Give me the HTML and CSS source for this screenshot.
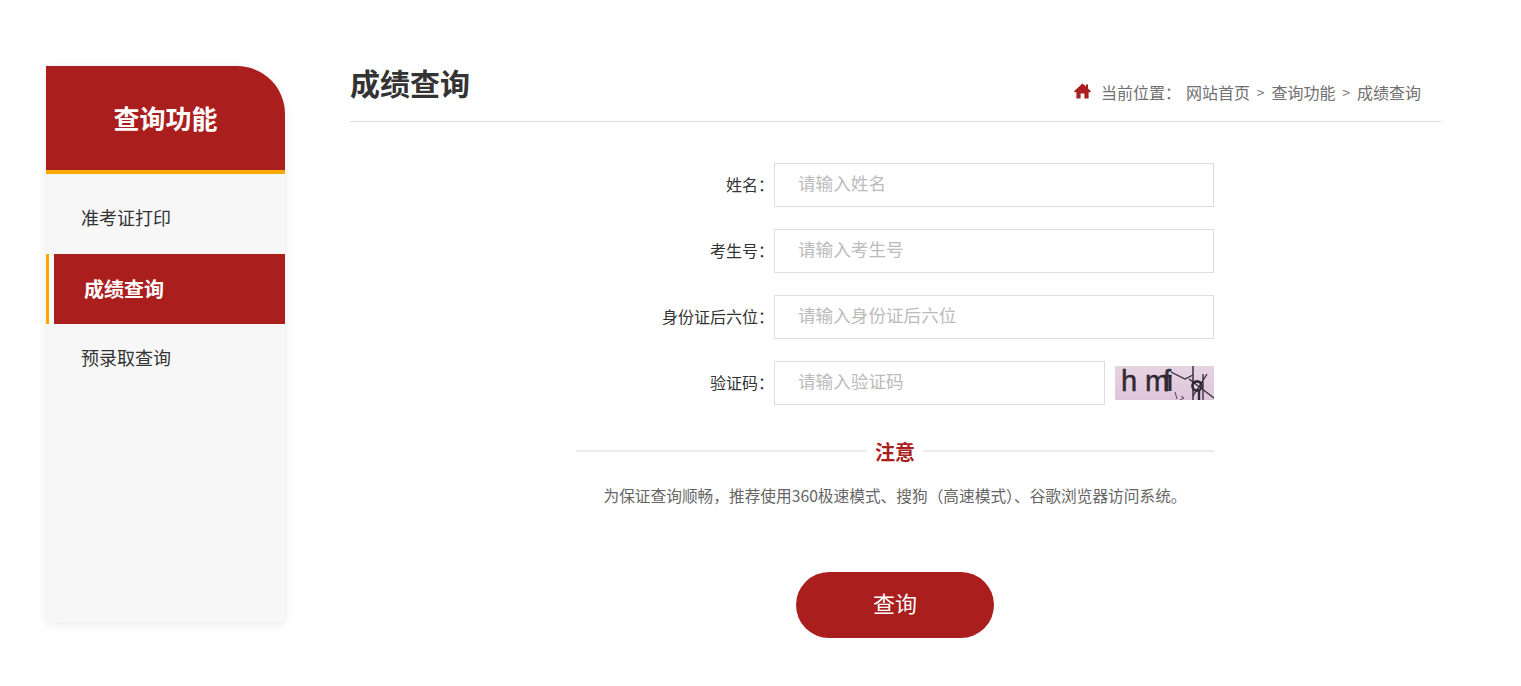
FILE: index.html
```html
<!DOCTYPE html>
<html lang="zh-CN">
<head>
  <meta charset="UTF-8">
  <title>成绩查询</title>
  <link rel="stylesheet" href="styles.css">
</head>
<body>
  <div class="wrapper">
    <div class="side">
      <div class="side-title">查询功能</div>
      <div class="side-nav">
        <a href="#">准考证打印</a>
        <a href="#" class="active">成绩查询</a>
        <a href="#">预录取查询</a>
      </div>
    </div>
    <div class="main">
      <div class="head">
        <h1>成绩查询</h1>
        <div class="crumb">
          <svg class="home" viewBox="0 0 17 16" width="17" height="16"><path d="M8.5 0.5 L12 3.6 V1.6 H14 V5.4 L17 8.2 L16 9.2 H14.6 V15.5 H10.4 V10.4 H6.6 V15.5 H2.4 V9.2 H1 L0 8.2 Z" fill="#ab1e1e"/></svg>
          <span class="crumb-label">当前位置：</span>
          <a href="#">网站首页</a><i>&gt;</i><a href="#">查询功能</a><i>&gt;</i><a href="#">成绩查询</a>
        </div>
      </div>
      <form class="form">
        <div class="row">
          <label>姓名：</label>
          <input type="text" placeholder="请输入姓名">
        </div>
        <div class="row">
          <label>考生号：</label>
          <input type="text" placeholder="请输入考生号">
        </div>
        <div class="row">
          <label>身份证后六位：</label>
          <input type="text" placeholder="请输入身份证后六位">
        </div>
        <div class="row">
          <label>验证码：</label>
          <input type="text" class="short" placeholder="请输入验证码">
          <svg class="captcha" viewBox="0 0 99 34" width="99" height="34">
            <defs>
              <linearGradient id="capbg" x1="0" y1="0" x2="0" y2="1">
                <stop offset="0" stop-color="#e6d4e2"/>
                <stop offset="1" stop-color="#dfc5dc"/>
              </linearGradient>
            </defs>
            <rect width="99" height="34" fill="url(#capbg)"/>
            <text class="cap-ink" x="6 30 48" y="25">hmf</text>
            <g fill="none" stroke="#2f2a33">
              <path d="M55 9 V25" stroke-width="3"/>
              <path d="M56 6 L70 13 L78 9" stroke-width="1.2"/>
              <path d="M78 0 V34" stroke-width="1.4"/>
              <circle cx="82" cy="20" r="4.6" stroke-width="2.6"/>
              <path d="M88 8 V34 M74 13 L99 32 M92 8 L78 30" stroke-width="1.3"/>
              <path d="M84 25 V34" stroke-width="2.4"/>
              <path d="M60 26 L62 33 M66 30 L69 32 L65 34" stroke-width="0.8"/>
            </g>
          </svg>
        </div>
        <div class="notice-head"><span>注意</span></div>
        <p class="notice">为保证查询顺畅，推荐使用360极速模式、搜狗（高速模式）、谷歌浏览器访问系统。</p>
        <button type="button" class="btn">查询</button>
      </form>
    </div>
  </div>
</body>
</html>
```

FILE: styles.css
```css
*{
  margin: 0;
  padding: 0;
  box-sizing: border-box;
}
body{
  background: #fff;
  font-family: "Noto Sans CJK SC", "Noto Sans", sans-serif;
  color: #333;
}
a{
  text-decoration: none;
  color: inherit;
}

.wrapper{
  display: flex;
  padding: 66px 80px 0 46px;
  height: 686px;
}

.side{
  width: 239px;
  height: 556px;
  flex: none;
  background: #f7f7f7;
  box-shadow: 0 3px 12px rgba(0,0,0,.08);
  border-radius: 0 48px 6px 6px;
}
.side-title{
  height: 108px;
  background: #ab1e1e;
  border-bottom: 4px solid #f9a800;
  border-top-right-radius: 48px;
  color: #fff;
  font-size: 26px;
  font-weight: bold;
  line-height: 104px;
  text-align: center;
}
.side-nav{
  padding-top: 10px;
}
.side-nav a{
  display: block;
  height: 70px;
  line-height: 66px;
  padding-left: 35px;
  font-size: 18px;
}
.side-nav a.active{
  position: relative;
  margin-left: 8px;
  padding-left: 30px;
  background: #ab1e1e;
  color: #fff;
  font-size: 20px;
  font-weight: bold;
  line-height: 70px;
}
.side-nav a.active::before{
  content: "";
  position: absolute;
  left: -8px;
  top: 0;
  bottom: 0;
  width: 3px;
  background: #f9a800;
}

.main{
  flex: 1;
  margin-left: 65px;
}
.head{
  display: flex;
  justify-content: space-between;
  align-items: flex-end;
  height: 56px;
  border-bottom: 1px solid #ddd;
  padding-right: 20px;
}
.head h1{
  font-size: 30px;
  line-height: 40px;
  margin-bottom: 19px;
  color: #333;
}
.crumb{
  display: flex;
  align-items: center;
  font-size: 16px;
  color: #707070;
  line-height: 24px;
  margin-bottom: 17px;
}
.home{
  margin-right: 10px;
  margin-top: -3px;
}
.crumb-label{
  margin-right: 5px;
}
.crumb i{
  width: 21.5px;
  font-style: normal;
  font-size: 14px;
  text-align: center;
}

.form{
  width: 638px;
  margin: 41px 0 0 226px;
}
.row{
  display: flex;
  align-items: center;
  justify-content: flex-end;
  height: 44px;
  margin-bottom: 22px;
}
.row label{
  margin-bottom: 2px;
  font-size: 16px;
  color: #333;
  white-space: nowrap;
}
.row input{
  width: 440px;
  height: 44px;
  border: 1px solid #ddd;
  padding: 0 0 6px 23px;
  font-size: 17.6px;
  font-family: inherit;
  outline: none;
}
.row input::placeholder{
  color: #bbb;
}
.row input.short{
  width: 331px;
  margin-right: 10px;
}
.captcha{
  display: block;
}
.cap-ink{
  font-family: "Liberation Sans", sans-serif;
  font-size: 29px;
  fill: #2f2a33;
  stroke: #2f2a33;
  stroke-width: .5;
}

.notice-head{
  display: flex;
  align-items: center;
  margin-top: 34px;
  height: 24px;
}
.notice-head::before,
.notice-head::after{
  content: "";
  flex: 1;
  height: 2px;
  background: #ebebeb;
}
.notice-head span{
  padding: 0 8px;
  font-size: 20px;
  font-weight: bold;
  color: #ab1e1e;
}
.notice{
  margin-top: 21px;
  font-size: 15.7px;
  line-height: 24px;
  color: #666;
  text-align: center;
}
.btn{
  display: block;
  width: 198px;
  height: 66px;
  margin: 64px auto 0;
  padding-bottom: 7px;
  border: 0;
  border-radius: 33px;
  background: #ab1e1e;
  color: #fff;
  font-size: 22px;
  font-family: inherit;
}
```
